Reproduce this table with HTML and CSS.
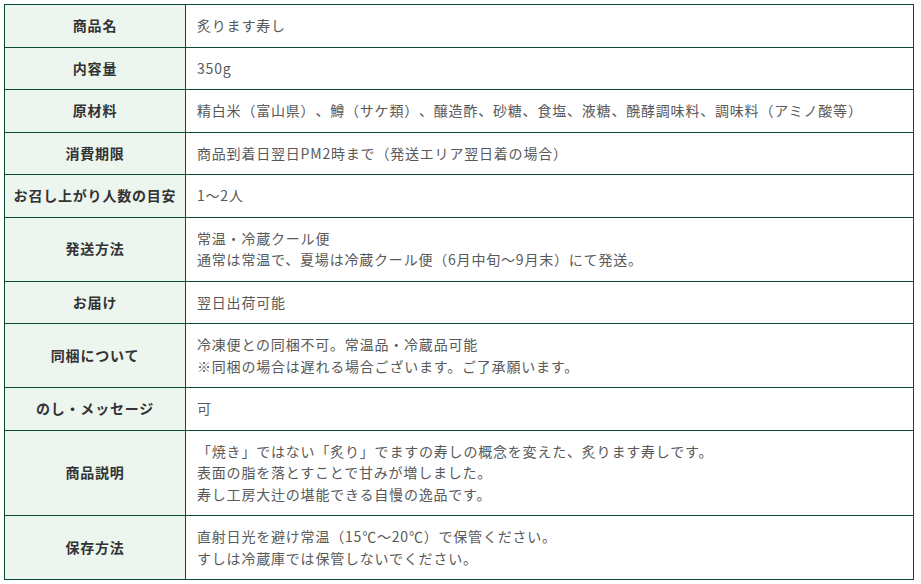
FILE: index.html
```html
<!DOCTYPE html>
<html lang="ja">
<head>
<meta charset="utf-8">
<title>炙ります寿し</title>
<link rel="stylesheet" href="styles.css">
</head>
<body>
<table class="spec">
  <tbody>
    <tr><th>商品名</th><td>炙ります寿し</td></tr>
    <tr><th>内容量</th><td>350g</td></tr>
    <tr><th>原材料</th><td>精白米（富山県）、鱒（サケ類）、醸造酢、砂糖、食塩、液糖、醗酵調味料、調味料（アミノ酸等）</td></tr>
    <tr><th>消費期限</th><td>商品到着日翌日PM2時まで（発送エリア翌日着の場合）</td></tr>
    <tr><th>お召し上がり人数の目安</th><td>1～2人</td></tr>
    <tr><th>発送方法</th><td>常温・冷蔵クール便<br>通常は常温で、夏場は冷蔵クール便（6月中旬～9月末）にて発送。</td></tr>
    <tr><th>お届け</th><td>翌日出荷可能</td></tr>
    <tr><th>同梱について</th><td>冷凍便との同梱不可。常温品・冷蔵品可能<br>※同梱の場合は遅れる場合ございます。ご了承願います。</td></tr>
    <tr><th>のし・メッセージ</th><td>可</td></tr>
    <tr><th>商品説明</th><td>「焼き」ではない「炙り」でますの寿しの概念を変えた、炙ります寿しです。<br>表面の脂を落とすことで甘みが増しました。<br>寿し工房大辻の堪能できる自慢の逸品です。</td></tr>
    <tr><th>保存方法</th><td>直射日光を避け常温（15℃～20℃）で保管ください。<br>すしは冷蔵庫では保管しないでください。</td></tr>
  </tbody>
</table>
</body>
</html>
```

FILE: styles.css
```css
html, body {
  margin: 0;
  padding: 0;
  background: #ffffff;
}
body {
  padding: 4px 0 0 4px;
  font-family: "Noto Sans CJK JP", "Noto Sans", sans-serif;
  font-size: 14px;
  line-height: 21.5px;
  letter-spacing: 0.8px;
  text-spacing-trim: space-all;
}
.spec {
  width: 910px;
  border-collapse: collapse;
  table-layout: fixed;
}
.spec th,
.spec td {
  border: 1px solid #0b4a32;
  padding: 10px 11px;
  vertical-align: middle;
}
.spec th {
  width: 168px;
  background: #edf5ef;
  color: #333333;
  font-weight: bold;
  text-align: center;
  padding: 10px 6px;
  white-space: nowrap;
}
.spec td {
  color: #595959;
  font-weight: normal;
  text-align: left;
}
```
